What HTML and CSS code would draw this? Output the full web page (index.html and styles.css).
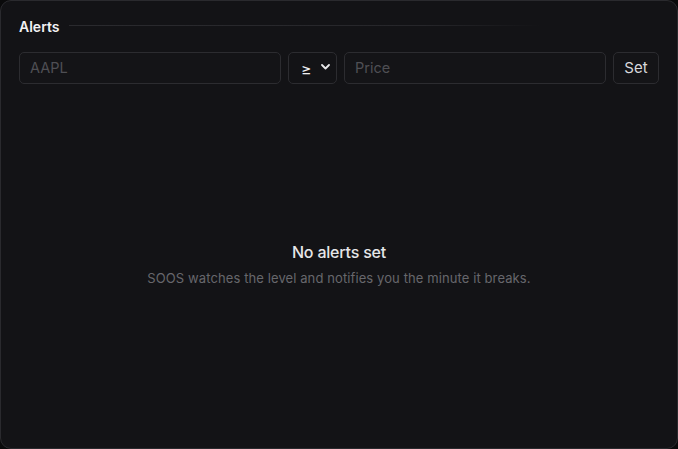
FILE: index.html
```html
<!DOCTYPE html>
<html>
<head>
<meta charset="utf-8">
<link rel="stylesheet" href="styles.css">
</head>
<body>
<div class="card">
  <div class="header">
    <span class="title">Alerts</span>
    <span class="rule"></span>
  </div>
  <div class="form">
    <input class="field" type="text" placeholder="AAPL">
    <div class="select"><span class="op">≥</span><svg class="chev" width="9" height="6" viewBox="0 0 9 6"><path d="M1 1 L4.5 4.5 L8 1" fill="none" stroke="#e8e8ea" stroke-width="1.8" stroke-linecap="round" stroke-linejoin="round"/></svg></div>
    <input class="field" type="text" placeholder="Price">
    <button class="btn">Set</button>
  </div>
  <div class="empty">
    <div class="empty-title">No alerts set</div>
    <div class="empty-sub">SOOS watches the level and notifies you the minute it breaks.</div>
  </div>
</div>
</body>
</html>
```

FILE: styles.css
```css
html, body {
  margin: 0;
  padding: 0;
  background: #0a0a0b;
  height: 100%;
}
body {
  font-family: Inter, "Noto Sans", sans-serif;
}
.card {
  box-sizing: border-box;
  width: 678px;
  height: 449px;
  background: #131316;
  border: 1px solid #2a2a2e;
  border-radius: 11px;
  padding: 15px 18px 0 18px;
  display: flex;
  flex-direction: column;
}
.header {
  display: flex;
  align-items: center;
  gap: 10px;
  height: 20px;
}
.title {
  color: #f2f2f4;
  font-size: 14px;
  font-weight: 600;
  letter-spacing: 0;
}
.rule {
  flex: 1;
  height: 1px;
  margin-top: -1px;
  background: linear-gradient(to right, #2a2a2e 0%, #26262a 60%, rgba(38,38,42,0) 80%);
}
.form {
  display: flex;
  gap: 7px;
  margin-top: 16px;
  height: 32px;
}
.field {
  box-sizing: border-box;
  flex: 1;
  height: 32px;
  min-width: 0;
  background: #141417;
  border: 1px solid #2c2c30;
  border-radius: 5px;
  padding: 0 10px 2px 10px;
  font-family: Inter, "Noto Sans", sans-serif;
  font-size: 14.5px;
  color: #e8e8ea;
  outline: none;
}
.field::placeholder {
  color: #4f4f54;
}
.select {
  box-sizing: border-box;
  width: 49px;
  height: 32px;
  border: 1px solid #2c2c30;
  border-radius: 5px;
  display: flex;
  align-items: center;
  padding-left: 12px;
  gap: 9px;
  color: #f0f0f2;
  font-size: 16px;
}
.op {
  margin-top: 1px;
}
.chev {
  margin-top: -3px;
}
.btn {
  box-sizing: border-box;
  width: 46px;
  height: 32px;
  background: #141417;
  border: 1px solid #2c2c30;
  border-radius: 5px;
  color: #d8d8dc;
  font-family: Inter, "Noto Sans", sans-serif;
  font-size: 15px;
  padding: 0 0 2px 0;
}
.empty {
  flex: 1;
  display: flex;
  flex-direction: column;
  align-items: center;
  padding-top: 158px;
}
.empty-title {
  color: #e6e6e8;
  font-size: 16px;
  font-weight: 500;
  letter-spacing: -0.2px;
}
.empty-sub {
  margin-top: 8px;
  color: #67676c;
  font-size: 13px;
  letter-spacing: 0.1px;
}
```
